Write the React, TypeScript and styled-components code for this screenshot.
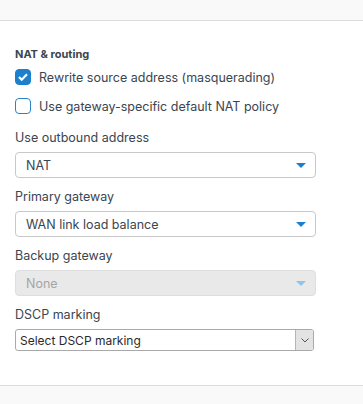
import styled, { createGlobalStyle } from 'styled-components';

const GlobalStyle = createGlobalStyle`
  html, body {
    margin: 0;
    padding: 0;
    background: #fff;
  }
  body {
    font-family: Inter, "Liberation Sans", sans-serif;
    color: #3a4550;
  }
`;

const StyledPage = styled.div`
  width: 363px;
  height: 404px;
  display: flex;
  flex-direction: column;
  background: #fff;
`;

const StyledHeader = styled.div`
  height: 20px;
  background: #f9f9f9;
  border-bottom: 1px solid #dcdcdc;
`;

const StyledBody = styled.div`
  flex: 1;
  padding: 26px 47px 0 15px;
  display: flex;
  flex-direction: column;
`;

const StyledFooter = styled.div`
  height: 18px;
  background: #f9f9f9;
  border-top: 1px solid #dcdcdc;
`;

const StyledSection = styled.div`
  font-size: 11px;
  font-weight: 700;
  color: #3a4550;
  margin-bottom: 8px;
`;

const StyledCheckRow = styled.label`
  display: flex;
  align-items: center;
  gap: 8px;
  font-size: 12.5px;
  height: 16px;
  margin-bottom: 13px;
`;

const StyledBox = styled.span<{ $checked?: boolean }>`
  width: 16px;
  height: 16px;
  box-sizing: border-box;
  border-radius: 4px;
  border: 1.5px solid ${p => p.$checked ? '#1d80cc' : '#2a82c8'};
  background: ${p => p.$checked ? '#1d80cc' : '#fff'};
  display: flex;
  align-items: center;
  justify-content: center;
`;

const StyledLabel = styled.div`
  font-size: 12.5px;
  margin: 3px 0 7px;
`;

const StyledSelect = styled.div<{ $disabled?: boolean }>`
  height: 26px;
  box-sizing: border-box;
  border: 1px solid ${p => p.$disabled ? '#dedede' : '#c8c8c8'};
  border-radius: 4px;
  background: ${p => p.$disabled ? '#e9e9e9' : '#fff'};
  color: ${p => p.$disabled ? '#a5a5a5' : '#3a4550'};
  display: flex;
  align-items: center;
  justify-content: space-between;
  padding: 0 9px 0 10px;
  font-size: 12.5px;
  margin-bottom: 8px;
`;

const StyledArrow = styled.span<{ $disabled?: boolean }>`
  width: 0;
  height: 0;
  border-left: 5px solid transparent;
  border-right: 5px solid transparent;
  border-top: 5px solid ${p => p.$disabled ? '#8ec5ee' : '#1a7fd4'};
`;

const StyledNative = styled.div`
  height: 22px;
  width: 299px;
  box-sizing: border-box;
  border: 1px solid #a9a9a9;
  border-radius: 3px;
  display: flex;
  align-items: stretch;
  font-size: 12px;
  color: #2b2b2b;
  overflow: hidden;
`;

const StyledNativeText = styled.span`
  flex: 1;
  display: flex;
  align-items: center;
  padding-left: 4px;
`;

const StyledNativeButton = styled.span`
  width: 17px;
  background: #e3e3e3;
  border-left: 1px solid #b5b5b5;
  display: flex;
  align-items: center;
  justify-content: center;
`;

function Check({ checked }: { checked?: boolean }) {
  return (
    <StyledBox $checked={checked}>
      {checked && (
        <svg width="10" height="8" viewBox="0 0 10 8">
          <path d="M1 4l2.7 2.7L9 1.3" stroke="#fff" strokeWidth="2.2" fill="none" />
        </svg>
      )}
    </StyledBox>
  );
}

export default function App() {
  return (
    <StyledPage>
      <GlobalStyle />
      <StyledHeader />
      <StyledBody>
        <StyledSection>NAT &amp; routing</StyledSection>
        <StyledCheckRow><Check checked />Rewrite source address (masquerading)</StyledCheckRow>
        <StyledCheckRow><Check />Use gateway-specific default NAT policy</StyledCheckRow>

        <StyledLabel>Use outbound address</StyledLabel>
        <StyledSelect>NAT<StyledArrow /></StyledSelect>

        <StyledLabel>Primary gateway</StyledLabel>
        <StyledSelect>WAN link load balance<StyledArrow /></StyledSelect>

        <StyledLabel>Backup gateway</StyledLabel>
        <StyledSelect $disabled>None<StyledArrow $disabled /></StyledSelect>

        <StyledLabel>DSCP marking</StyledLabel>
        <StyledNative>
          <StyledNativeText>Select DSCP marking</StyledNativeText>
          <StyledNativeButton>
            <svg width="8" height="5" viewBox="0 0 8 5">
              <path d="M0.5 0.5L4 4L7.5 0.5" stroke="#555" strokeWidth="1" fill="none" />
            </svg>
          </StyledNativeButton>
        </StyledNative>
      </StyledBody>
      <StyledFooter />
    </StyledPage>
  );
}
